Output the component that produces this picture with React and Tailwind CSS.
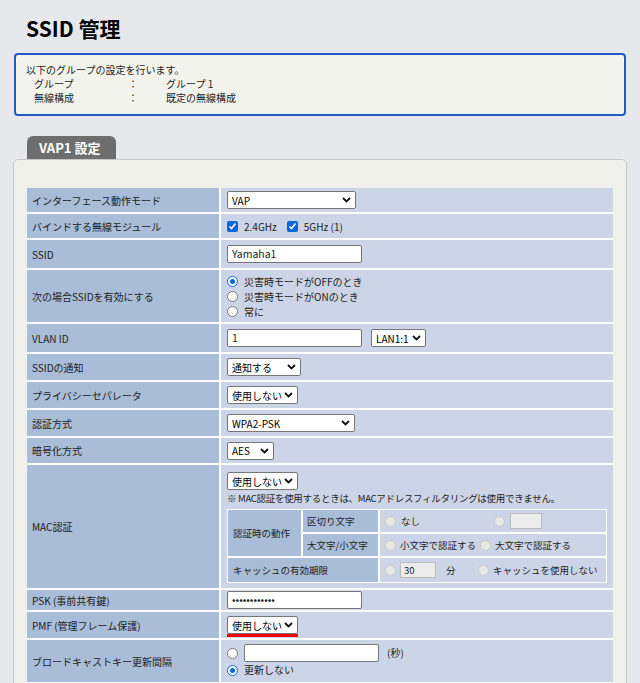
import React from "react";

const font = { fontFamily: '"Noto Sans CJK JP", "Liberation Sans", sans-serif' };

const Select = ({ w, children, className = "" }) => (
  <div className={`h-[18px] bg-white border border-[#767676] rounded-[2px] flex items-center justify-between px-1 text-[10px] text-black whitespace-nowrap ${w} ${className}`}>
    <span>{children}</span>
    <svg width="9" height="6" viewBox="0 0 9 6" className="shrink-0"><path d="M1 1l3.5 3.5L8 1" stroke="#111" strokeWidth="1.8" fill="none" /></svg>
  </div>
);

const Input = ({ w, children, className = "" }) => (
  <div className={`h-[18px] bg-white border border-[#767676] rounded-[2px] flex items-center px-1 text-[10.5px] ${w} ${className}`}>{children}</div>
);

const Radio = ({ on, dim }) => (
  <span className={`inline-block w-[11px] h-[11px] rounded-full border shrink-0 ${on ? "border-[#0a66d8] bg-white flex items-center justify-center" : dim ? "border-[#c8c8c8] bg-[#e8e8e8]" : "border-[#767676] bg-white"}`}>
    {on && <span className="block w-[5px] h-[5px] rounded-full bg-[#0a66d8] m-[2px]" />}
  </span>
);

const Check = () => (
  <span className="inline-flex w-[11px] h-[11px] rounded-[2px] bg-[#0a66d8] items-center justify-center">
    <svg width="9" height="9" viewBox="0 0 9 9"><path d="M1.5 4.5l2 2 4-5" stroke="#fff" strokeWidth="1.6" fill="none" /></svg>
  </span>
);

const Row = ({ label, h, children }) => (
  <div className={`flex border-b-2 border-white ${h}`}>
    <div className="w-[194px] bg-[#a9bcd8] flex items-center px-[5px] border-r-2 border-white whitespace-nowrap">{label}</div>
    <div className="flex-1 bg-[#ccd5e7] flex flex-col justify-center px-[6px]">{children}</div>
  </div>
);

export default function App() {
  return (
    <div style={font} className="w-[640px] h-[683px] overflow-hidden bg-[#e7e8eb] text-[10px] text-[#222]">
      <h1 className="pl-[26px] pt-[14px] text-[21px] font-bold text-black leading-[28px]">SSID 管理</h1>
      <div className="mx-[14px] mt-[11px] h-[63px] border-2 border-[#2358c8] rounded-[4px] bg-[#f3f3ee] px-[10px] pt-[8px] leading-[14px] text-[10px]">
        <div>以下のグループの設定を行います。</div>
        <div className="flex pl-[8px]"><span className="w-[94px]">グループ</span><span className="w-[38px]">：</span><span>グループ 1</span></div>
        <div className="flex pl-[8px]"><span className="w-[94px]">無線構成</span><span className="w-[38px]">：</span><span>既定の無線構成</span></div>
      </div>
      <div className="ml-[27px] mt-[20px] w-[89px] h-[23px] bg-[#6e6e6e] rounded-t-[6px] text-white font-bold text-[13px] flex items-center pl-[12px]">VAP1 設定</div>
      <div className="mx-[13px] bg-[#f1f1ec] border border-[#c8c8c8] rounded-[5px] pt-[28px] px-[13px] h-[540px]">
        <Row label="インターフェース動作モード" h="h-[26px]"><Select w="w-[129px]">VAP</Select></Row>
        <Row label="バインドする無線モジュール" h="h-[26px]">
          <div className="flex items-center gap-[6px]"><Check /><span className="mr-[4px]">2.4GHz</span><Check /><span>5GHz (1)</span></div>
        </Row>
        <Row label="SSID" h="h-[30px]"><Input w="w-[135px]">Yamaha1</Input></Row>
        <Row label="次の場合SSIDを有効にする" h="h-[54px]">
          <div className="leading-[15px]">
            <div className="flex items-center gap-[6px]"><Radio on /><span>災害時モードがOFFのとき</span></div>
            <div className="flex items-center gap-[6px]"><Radio /><span>災害時モードがONのとき</span></div>
            <div className="flex items-center gap-[6px]"><Radio /><span>常に</span></div>
          </div>
        </Row>
        <Row label="VLAN ID" h="h-[30px]">
          <div className="flex gap-[9px]"><Input w="w-[135px]">1</Input><Select w="w-[55px]">LAN1:1</Select></div>
        </Row>
        <Row label="SSIDの通知" h="h-[28px]"><Select w="w-[74px]">通知する</Select></Row>
        <Row label="プライバシーセパレータ" h="h-[28px]"><Select w="w-[71px]">使用しない</Select></Row>
        <Row label="認証方式" h="h-[28px]"><Select w="w-[128px]">WPA2-PSK</Select></Row>
        <Row label="暗号化方式" h="h-[27px]"><Select w="w-[47px]">AES</Select></Row>
        <div className="flex border-b-2 border-white h-[125px]">
          <div className="w-[194px] bg-[#a9bcd8] flex items-center px-[5px] border-r-2 border-white">MAC認証</div>
          <div className="flex-1 bg-[#ccd5e7] px-[6px] pt-[7px]">
            <Select w="w-[71px]">使用しない</Select>
            <div className="text-[9.5px] leading-[14px] mt-[1px] whitespace-nowrap tracking-[-0.3px]">※ MAC認証を使用するときは、MACアドレスフィルタリングは使用できません。</div>
            <div className="mt-[4px] w-[380px] border border-white grid grid-cols-[75px_77px_1fr] text-[9.5px] whitespace-nowrap">
              <div className="row-span-2 bg-[#a9bcd8] flex items-center px-[5px] border-r-2 border-b-2 border-white">認証時の動作</div>
              <div className="h-[24px] bg-[#a9bcd8] flex items-center px-[4px] border-r-2 border-b-2 border-white">区切り文字</div>
              <div className="h-[24px] flex items-center px-[5px] border-b-2 border-white gap-[5px]">
                <Radio dim /><span className="w-[88px]">なし</span><Radio dim /><span className="w-[32px] h-[16px] bg-[#ececec] border border-[#bbb]" />
              </div>
              <div className="h-[24px] bg-[#a9bcd8] flex items-center px-[4px] border-r-2 border-b-2 border-white">大文字/小文字</div>
              <div className="h-[24px] flex items-center px-[5px] border-b-2 border-white gap-[4px]">
                <Radio dim /><span>小文字で認証する</span><Radio dim /><span>大文字で認証する</span>
              </div>
              <div className="col-span-2 h-[24px] bg-[#a9bcd8] flex items-center px-[5px] border-r-2 border-white">キャッシュの有効期限</div>
              <div className="h-[24px] flex items-center px-[5px] gap-[4px]">
                <Radio dim /><span className="w-[36px] h-[16px] bg-[#ececec] border border-[#bbb] px-[3px] leading-[14px]">30</span><span className="w-[34px] pl-[6px]">分</span><Radio dim /><span>キャッシュを使用しない</span>
              </div>
            </div>
          </div>
        </div>
        <Row label="PSK (事前共有鍵)" h="h-[22px]"><Input w="w-[135px]">••••••••••••</Input></Row>
        <Row label="PMF (管理フレーム保護)" h="h-[28px]">
          <div className="relative w-[71px]"><Select w="w-[71px]">使用しない</Select><div className="absolute left-0 top-[18px] w-[71px] h-[3px] bg-[#f00000]" /></div>
        </Row>
        <Row label="ブロードキャストキー更新間隔" h="h-[44px]">
          <div className="leading-[16px]">
            <div className="flex items-center gap-[6px]"><Radio /><Input w="w-[135px]" /><span className="ml-[2px]">(秒)</span></div>
            <div className="flex items-center gap-[6px]"><Radio on /><span>更新しない</span></div>
          </div>
        </Row>
      </div>
    </div>
  );
}
